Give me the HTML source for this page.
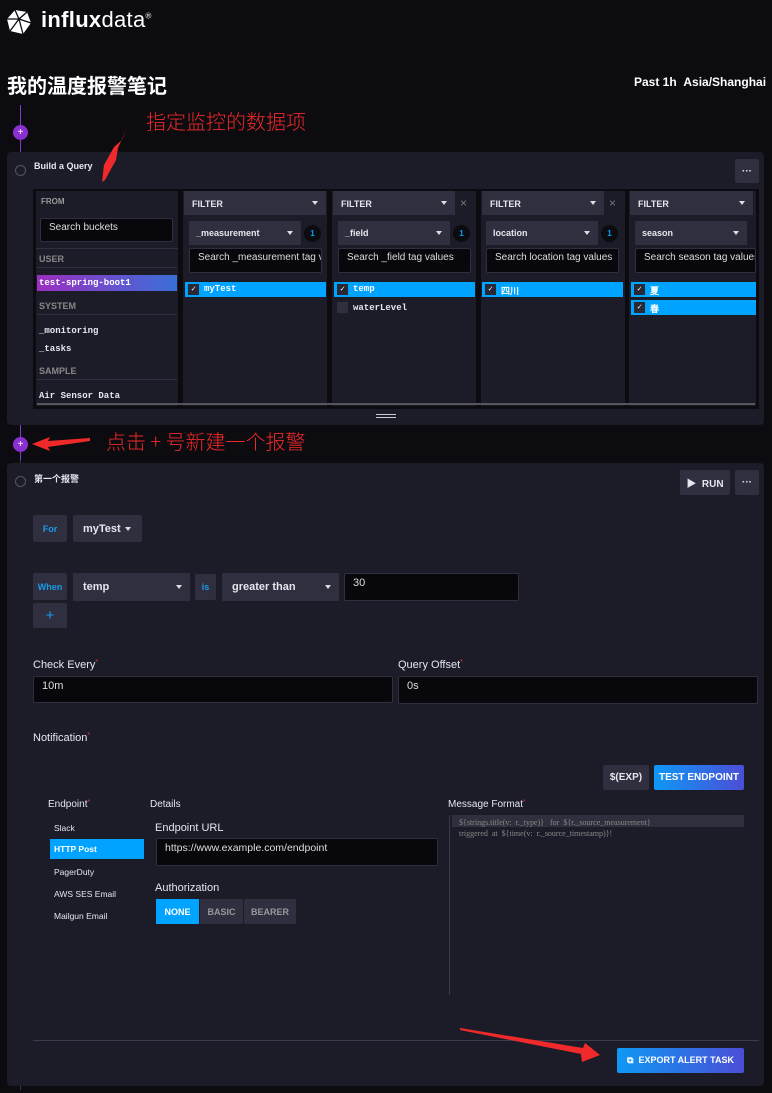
<!DOCTYPE html>
<html><head><meta charset="utf-8"><style>
*{box-sizing:border-box;margin:0;padding:0}
body{width:772px;height:1093px;background:#0b0b10;font-family:"Liberation Sans","Noto Sans CJK SC",sans-serif;color:#e6e6ee;position:relative;overflow:hidden}
.a{position:absolute}
.panel{background:#1c1c29;border-radius:4px}
.btn{background:#2f2f40;border-radius:2px;color:#e6e6ee;font-weight:bold;font-size:10px;display:flex;align-items:center;justify-content:center}
.inp{background:#08080c;border:1px solid #2f2f40;border-radius:2px;font-size:10px;color:#ddd;padding:3px 8px;white-space:nowrap;overflow:hidden}
.red{color:#f02a2a;font-size:20px;font-family:"Noto Sans CJK SC",sans-serif;font-weight:300;white-space:nowrap}
.col{background:#1c1c29;}
.fh{background:#2f2f40;height:24px;font-size:9px;font-weight:bold;padding:8px 8px;}
.dd{background:#2f2f40;height:24px;font-size:9px;font-weight:bold;padding:7px 7px;}
.car{position:absolute;right:8px;top:10px;width:0;height:0;border-left:3.5px solid transparent;border-right:3.5px solid transparent;border-top:4px solid #ddd}
.sel{background:#00a3ff;height:15px;font-family:"Liberation Mono",monospace;font-size:9px;font-weight:bold;color:#fff;padding:2px 0 0 19px;position:absolute;white-space:nowrap}
.cb{position:absolute;left:3px;top:2px;width:11px;height:11px;background:#292936;color:#fff;font-size:8px;line-height:11px;text-align:center}
.mono{font-family:"Liberation Mono",monospace;font-size:9px;font-weight:bold;white-space:nowrap}
.badge{width:17px;height:17px;border-radius:50%;background:#0b0b10;color:#00a3ff;font-size:8px;font-weight:bold;text-align:center;line-height:17px}
.lbl{font-size:11px;color:#e6e6ee}
</style></head><body>
<svg class="a" style="left:6px;top:9px" width="26" height="26" viewBox="0 0 26 26"><polygon points="9,1 21,3 25,14 17,25 4,22 1,10" fill="#fff"/><path d="M9,1 L13,10 L21,3 M13,10 L1,10 M13,10 L17,25 M13,10 L25,14 M13,10 L4,22" stroke="#0b0b10" stroke-width="1.3" fill="none"/></svg>
<div class="a" style="left:41px;top:7px;font-size:22px;color:#fff;letter-spacing:0.3px"><b>influx</b>data<sup style="font-size:8px">®</sup></div>
<div class="a" style="left:7px;top:70px;font-size:20px;font-weight:bold;color:#fff;font-family:'Noto Sans CJK SC',sans-serif">我的温度报警笔记</div>
<div class="a" style="left:634px;top:75px;font-size:12px;font-weight:bold;color:#fff">Past 1h&nbsp;&nbsp;Asia/Shanghai</div>
<div class="a red" style="left:146px;top:106px">指定监控的数据项</div>
<div class="a red" style="left:106px;top:426px">点击 + 号新建一个报警</div>
<div class="a red" style="left:381px;top:990px">导出告警任务</div>

<div class="a" style="left:20px;top:105px;width:1px;height:355px;background:#7a3fd0"></div>
<div class="a" style="left:20px;top:460px;width:1px;height:630px;background:#3a3a4a"></div>

<div class="a panel" style="left:7px;top:152px;width:757px;height:273px"></div>
<div class="a" style="left:34px;top:161px;font-size:9px;font-weight:bold">Build a Query</div>
<div class="a btn" style="left:735px;top:159px;width:24px;height:24px">···</div>
<div class="a" style="left:33px;top:189px;width:726px;height:220px;background:#0b0b10"></div>
<div class="a col" style="left:36px;top:191px;width:142px;height:215px"></div>
<div class="a" style="left:41px;top:197px;font-size:8px;font-weight:bold;color:#999">FROM</div>
<div class="a inp" style="left:40px;top:218px;width:133px;height:24px">Search buckets</div>
<div class="a" style="left:36px;top:248px;width:142px;height:1px;background:#2f2f40"></div>
<div class="a" style="left:39px;top:254px;font-size:9px;font-weight:bold;color:#888">USER</div>
<div class="a" style="left:37px;top:267px;width:140px;height:1px;background:#2f2f40"></div>
<div class="a mono" style="left:37px;top:275px;width:140px;height:16px;background:linear-gradient(90deg,#9a2fc0,#3a6fd8);padding:3px 2px;color:#fff">test-spring-boot1</div>
<div class="a" style="left:39px;top:301px;font-size:9px;font-weight:bold;color:#888">SYSTEM</div>
<div class="a" style="left:37px;top:314px;width:140px;height:1px;background:#2f2f40"></div>
<div class="a mono" style="left:39px;top:326px">_monitoring</div>
<div class="a mono" style="left:39px;top:344px">_tasks</div>
<div class="a" style="left:39px;top:366px;font-size:9px;font-weight:bold;color:#888">SAMPLE</div>
<div class="a" style="left:37px;top:379px;width:140px;height:1px;background:#2f2f40"></div>
<div class="a mono" style="left:39px;top:391px">Air Sensor Data</div>

<div class="a col" style="left:183px;top:191px;width:144px;height:215px"></div>
<div class="a fh" style="left:184px;top:191px;width:142px">FILTER<span class="car"></span></div>
<div class="a dd" style="left:189px;top:221px;width:112px">_measurement<span class="car"></span></div>
<div class="a badge" style="left:304px;top:225px">1</div>
<div class="a inp" style="left:189px;top:248px;width:133px;height:25px">Search _measurement tag valu</div>
<div class="a sel" style="left:185px;top:282px;width:141px"><span class="cb">✓</span>myTest</div>

<div class="a col" style="left:332px;top:191px;width:144px;height:215px"></div>
<div class="a fh" style="left:333px;top:191px;width:122px">FILTER<span class="car"></span></div>
<div class="a" style="left:460px;top:196px;color:#777;font-size:12px">×</div>
<div class="a dd" style="left:338px;top:221px;width:112px">_field<span class="car"></span></div>
<div class="a badge" style="left:453px;top:225px">1</div>
<div class="a inp" style="left:338px;top:248px;width:133px;height:25px">Search _field tag values</div>
<div class="a sel" style="left:334px;top:282px;width:141px"><span class="cb">✓</span>temp</div>
<div class="a" style="left:337px;top:302px;width:11px;height:11px;background:#2f2f40"></div>
<div class="a mono" style="left:353px;top:303px">waterLevel</div>

<div class="a col" style="left:481px;top:191px;width:144px;height:215px"></div>
<div class="a fh" style="left:482px;top:191px;width:122px">FILTER<span class="car"></span></div>
<div class="a" style="left:609px;top:196px;color:#777;font-size:12px">×</div>
<div class="a dd" style="left:486px;top:221px;width:112px">location<span class="car"></span></div>
<div class="a badge" style="left:601px;top:225px">1</div>
<div class="a inp" style="left:486px;top:248px;width:133px;height:25px">Search location tag values</div>
<div class="a sel" style="left:482px;top:282px;width:141px"><span class="cb">✓</span>四川</div>

<div class="a col" style="left:629px;top:191px;width:127px;height:215px;overflow:hidden"></div>
<div class="a fh" style="left:630px;top:191px;width:123px">FILTER<span class="car"></span></div>
<div class="a dd" style="left:635px;top:221px;width:112px">season<span class="car"></span></div>
<div class="a inp" style="left:635px;top:248px;width:121px;height:25px">Search season tag values</div>
<div class="a sel" style="left:631px;top:282px;width:125px"><span class="cb">✓</span>夏</div>
<div class="a sel" style="left:631px;top:300px;width:125px"><span class="cb">✓</span>春</div>
<div class="a" style="left:37px;top:403px;width:718px;height:2px;background:#555560"></div>
<div class="a" style="left:376px;top:414px;width:20px;height:1px;background:#ccc"></div>
<div class="a" style="left:376px;top:417px;width:20px;height:1px;background:#ccc"></div>

<div class="a panel" style="left:7px;top:463px;width:757px;height:623px"></div>
<div class="a" style="left:34px;top:472px;font-size:9px;font-weight:bold">第一个报警</div>
<div class="a btn" style="left:680px;top:470px;width:50px;height:25px">▶&nbsp;&nbsp;RUN</div>
<div class="a btn" style="left:735px;top:470px;width:24px;height:25px">···</div>
<div class="a btn" style="left:33px;top:515px;width:34px;height:27px;color:#1a9be8;font-size:9px">For</div>
<div class="a btn" style="left:73px;top:515px;width:69px;height:27px;font-size:11px;justify-content:flex-start;padding-left:10px">myTest<span style="position:absolute;left:52px;top:12px;border-left:3.5px solid transparent;border-right:3.5px solid transparent;border-top:4px solid #ddd"></span></div>
<div class="a btn" style="left:33px;top:573px;width:34px;height:27px;color:#1a9be8;font-size:9px">When</div>
<div class="a dd" style="left:73px;top:573px;width:117px;height:28px;font-size:11px;padding:8px 10px">temp<span class="car" style="top:12px"></span></div>
<div class="a btn" style="left:195px;top:574px;width:21px;height:26px;color:#1a9be8;font-size:9px">is</div>
<div class="a dd" style="left:222px;top:573px;width:117px;height:28px;font-size:11px;padding:8px 10px">greater than<span class="car" style="top:12px"></span></div>
<div class="a inp" style="left:344px;top:573px;width:175px;height:28px;font-size:11px">30</div>
<div class="a btn" style="left:33px;top:603px;width:34px;height:25px;color:#1a9be8;font-size:15px;font-weight:normal">+</div>

<div class="a lbl" style="left:33px;top:659px">Check Every<span style="color:#e33;font-size:7px;vertical-align:top">*</span></div>
<div class="a inp" style="left:33px;top:676px;width:360px;height:27px;font-size:11px">10m</div>
<div class="a lbl" style="left:398px;top:659px">Query Offset<span style="color:#e33;font-size:7px;vertical-align:top">*</span></div>
<div class="a inp" style="left:398px;top:676px;width:360px;height:28px;font-size:11px">0s</div>
<div class="a lbl" style="left:33px;top:732px">Notification<span style="color:#e33;font-size:7px;vertical-align:top">*</span></div>
<div class="a btn" style="left:603px;top:765px;width:46px;height:25px">$(EXP)</div>
<div class="a btn" style="left:654px;top:765px;width:90px;height:25px;background:linear-gradient(90deg,#0f98f5,#4b4ed6);color:#fff">TEST ENDPOINT</div>

<div class="a" style="left:48px;top:799px;font-size:10px">Endpoint<span style="color:#e33;font-size:7px;vertical-align:top">*</span></div>
<div class="a" style="left:150px;top:799px;font-size:10px">Details</div>
<div class="a" style="left:448px;top:799px;font-size:10px">Message Format<span style="color:#e33;font-size:7px;vertical-align:top">*</span></div>
<div class="a" style="left:54px;top:823px;font-size:8.5px">Slack</div>
<div class="a" style="left:50px;top:839px;width:94px;height:20px;background:#00a3ff;font-size:8.5px;font-weight:bold;color:#fff;padding:5px 4px">HTTP Post</div>
<div class="a" style="left:54px;top:867px;font-size:8.5px">PagerDuty</div>
<div class="a" style="left:54px;top:889px;font-size:8.5px">AWS SES Email</div>
<div class="a" style="left:54px;top:911px;font-size:8.5px">Mailgun Email</div>
<div class="a" style="left:155px;top:822px;font-size:11px">Endpoint URL</div>
<div class="a inp" style="left:156px;top:838px;width:282px;height:28px;font-size:10.5px">https://www.example.com/endpoint</div>
<div class="a" style="left:155px;top:882px;font-size:11px">Authorization</div>
<div class="a" style="left:156px;top:899px;width:43px;height:25px;background:#00a3ff;color:#fff;font-size:9px;font-weight:bold;display:flex;align-items:center;justify-content:center">NONE</div>
<div class="a btn" style="left:200px;top:899px;width:43px;height:25px;color:#999;font-size:9px">BASIC</div>
<div class="a btn" style="left:244px;top:899px;width:52px;height:25px;color:#999;font-size:9px">BEARER</div>
<div class="a" style="left:449px;top:815px;width:1px;height:180px;background:#3a3a4a"></div>
<div class="a" style="left:452px;top:815px;width:292px;height:12px;background:#2f2f3d"></div>
<div class="a" style="left:459px;top:817px;font-family:'Liberation Serif',serif;font-size:8px;color:#888;line-height:11px;white-space:pre">${strings.title(v:  r._type)}   for  ${r._source_measurement}
triggered  at  ${time(v:  r._source_timestamp)}!</div>
<div class="a" style="left:33px;top:1040px;width:726px;height:1px;background:#3a3a4a"></div>
<div class="a btn" style="left:617px;top:1048px;width:127px;height:25px;background:linear-gradient(90deg,#0f98f5,#4b4ed6);color:#fff;font-size:9px">⧉&nbsp; EXPORT ALERT TASK</div>

<div class="a" style="left:13px;top:125px;width:15px;height:15px;border-radius:50%;background:#8a2fd0;color:#fff;font-size:10px;text-align:center;line-height:15px">+</div>
<div class="a" style="left:15px;top:165px;width:11px;height:11px;border-radius:50%;border:1px solid #555;background:#1c1c29"></div>
<div class="a" style="left:13px;top:437px;width:15px;height:15px;border-radius:50%;background:#8a2fd0;color:#fff;font-size:10px;text-align:center;line-height:15px">+</div>
<div class="a" style="left:15px;top:476px;width:11px;height:11px;border-radius:50%;border:1px solid #555;background:#1c1c29"></div>

<svg class="a" style="left:0;top:0" width="772" height="1093">
<polygon points="127,128 118,148 116,160 105,180 102,182 104,165 114,147 122,140" fill="#f02a2a"/>
<polygon points="32,444 50,437 48,441 90,438 90,441 48,447 50,451" fill="#f02a2a"/>
<polygon points="460,1030 460,1028 583,1048 585,1043 600,1055 582,1062 581,1054" fill="#f02a2a"/>
</svg>
</body></html>
